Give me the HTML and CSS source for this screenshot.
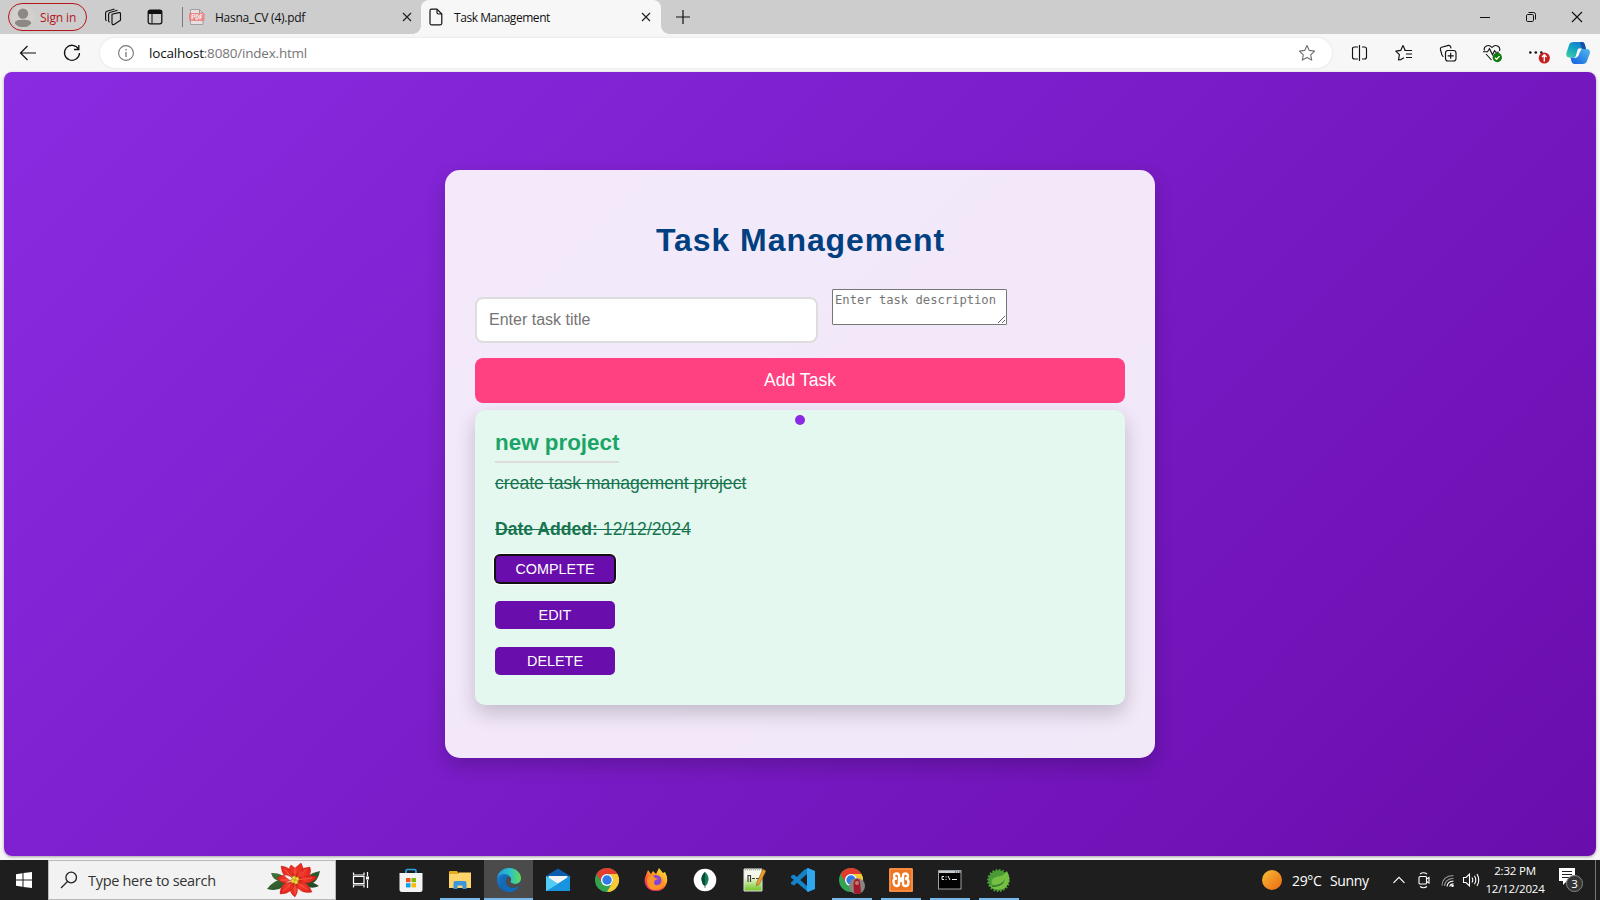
FILE: index.html
```html
<!DOCTYPE html>
<html lang="en">
<head>
<meta charset="utf-8">
<title>Task Management</title>
<link rel="stylesheet" href="styles.css">
</head>
<body>
<header class="tabstrip">
  <div class="signin">
    <svg class="avatar" width="22" height="22" viewBox="0 0 22 22"><defs><clipPath id="av"><circle cx="11" cy="11" r="11"/></clipPath></defs><g clip-path="url(#av)"><rect width="22" height="22" fill="#d3d0cd"/><circle cx="11" cy="7.6" r="5.2" fill="#8c8883"/><path d="M2.8 17.5C2.8 14.4 6 13.8 11 13.8s8.200.6 8.200 3.700C17 20.500 14 21 11 21s-6-.5-8.200-3.500z" fill="#8c8883"/></g></svg>
    <span>Sign in</span>
  </div>
  <svg class="workspaces" width="18" height="18" viewBox="0 0 18 18" fill="none" stroke="#111" stroke-width="1.15" stroke-linejoin="round"><path d="M8 6.200 14.800 4.600q1.700-.2 1.700 1.200v6.400L10 16.500q-2 .6-2-1.200z"/><path d="M5.600 14.200q-1-.3-1-1.500V6.200q0-1.300 1.300-1.700L13.500 2.300M2.600 12.700q-1-.4-1-1.500V4.900q0-1.300 1.300-1.700L10.500 1"/></svg>
  <svg class="tabmenu" width="16" height="16" viewBox="0 0 16 16"><rect x="1.200" y="1.200" width="13.600" height="13.600" rx="2" fill="none" stroke="#111" stroke-width="1.300"/><path d="M1.200 5V3q0-2 2-2h9.600q2 0 2 2v2z" fill="#111"/><path d="M5 5v9.500" stroke="#111"/></svg>
  <div class="tab">
    <svg width="16" height="18" viewBox="0 0 16 18"><path d="M1.500 1.500h9l3.500 3.500v11.500h-12.500z" fill="#e9dfe0" stroke="#a0a0a0"/><path d="M10.500 1.500v3.500H14" fill="none" stroke="#999"/><rect y="5" width="15.500" height="8" rx="1" fill="#e88888"/><path d="M3 11.500v-5h1.500q1.200 0 1.200 1.300T4.500 9H3M7 6.700v4.600h.8q1.600 0 1.600-2.300T7.800 6.700zM11 11.500V6.800h2.400M11 9h2" fill="none" stroke="#fff" stroke-width="1"/></svg>
    <span class="tab-label">Hasna_CV (4).pdf</span>
    <svg class="close" width="10" height="10" viewBox="0 0 10 10"><path d="M1 1l8 8M9 1L1 9" stroke="#222" stroke-width="1.200"/></svg>
  </div>
  <div class="tab active">
    <svg width="14" height="18" viewBox="0 0 14 18" fill="none" stroke="#111" stroke-width="1.200" stroke-linejoin="round"><path d="M2.500 1.200h5.500L12.800 6v9.300q0 1.500-1.500 1.500H2.500Q1 16.800 1 15.300V2.700q0-1.500 1.500-1.500z"/><path d="M8 1.400V4.500Q8 6 9.500 6h3"/></svg>
    <span class="tab-label">Task Management</span>
    <svg class="close" width="10" height="10" viewBox="0 0 10 10"><path d="M1 1l8 8M9 1L1 9" stroke="#222" stroke-width="1.200"/></svg>
  </div>
  <svg class="newtab" width="14" height="14" viewBox="0 0 14 14"><path d="M7 0v14M0 7h14" stroke="#111" stroke-width="1.200"/></svg>
  <div class="window-controls">
    <svg width="12" height="12" viewBox="0 0 12 12"><path d="M1 6.500h10" stroke="#111"/></svg>
    <svg width="12" height="12" viewBox="0 0 12 12" fill="none" stroke="#111"><rect x="1.500" y="3.500" width="7" height="7" rx="1.200"/><path d="M3.500 1.500H8.500q2 0 2 2v5"/></svg>
    <svg width="12" height="12" viewBox="0 0 12 12"><path d="M1 1l10 10M11 1L1 11" stroke="#111" stroke-width="1.100"/></svg>
  </div>
</header>

<nav class="toolbar">
  <svg class="back" width="18" height="16" viewBox="0 0 18 16" fill="none" stroke="#111" stroke-width="1.200"><path d="M17 8H1.500M8.500 1L1.500 8l7 7"/></svg>
  <svg class="reload" width="18" height="18" viewBox="0 0 18 18" fill="none" stroke="#111" stroke-width="1.300"><path d="M15.500 5A7.500 7.500 0 1 0 16.500 9M15.800 1v4.500H11"/></svg>
  <div class="address">
    <svg width="16" height="16" viewBox="0 0 16 16" fill="none" stroke="#767676"><circle cx="8" cy="8" r="7.400" stroke-width="1.100"/><path d="M8 7v5M8 4v1.500" stroke-width="1.300"/></svg>
    <span class="url"><b>localhost</b>:8080/index.html</span>
    <svg class="star" width="18" height="18" viewBox="0 0 18 18" fill="none" stroke="#6e6e6e" stroke-width="1.100" stroke-linejoin="round"><path d="M9 1.500l2.300 4.900 5.300.7-3.900 3.700 1 5.300L9 13.500l-4.700 2.600 1-5.300L1.400 7.100l5.300-.7z"/></svg>
  </div>
  <div class="tools">
    <svg width="18" height="18" viewBox="0 0 18 18" fill="none" stroke="#111" stroke-width="1.150"><path d="M7 3H3.500Q1.500 3 1.500 5v8q0 2 2 2H7M11 3h2.500q2 0 2 2v8q0 2-2 2H11M8.500 1v16"/></svg>
    <svg width="18" height="18" viewBox="0 0 18 18" fill="none" stroke="#111" stroke-width="1.150" stroke-linejoin="round"><path d="M5 16L9 13.700M9.300 6.500H17M11 10H17M11 13.500H17M10.300 6.500L8 1.500 5.700 6.400.8 7.100l3.600 3.600-.9 5.300L5 15.500"/></svg>
    <svg width="18" height="18" viewBox="0 0 18 18" fill="none" stroke="#111" stroke-width="1.150"><rect x="6.500" y="6.500" width="10.500" height="10.500" rx="2.500"/><path d="M11.700 8.800v6M8.700 11.800h6M4.600 12.500q-1.200-.2-1.600-1.400L1.400 5.500q-.4-1.700 1.200-2.200L9.500 1.400q1.500-.3 2 1.100l.6 1.900"/></svg>
    <svg width="20" height="20" viewBox="0 0 20 20" fill="none" stroke="#111" stroke-width="1.100"><path d="M1.500 7.500C0 3.500 5.500.5 9 4.500 12.500.5 18 3.500 16.500 8M3 11l5.500 6M0 8.700h4.500l2-3 3 6 2-4 1.300 1.500h3"/><circle cx="14.300" cy="14.500" r="4.700" fill="#107c10" stroke="none"/><path d="M12 14.700l1.600 1.600 3-3.200" stroke="#fff" stroke-width="1.300"/></svg>
    <svg width="22" height="22" viewBox="0 0 22 22"><g fill="#111"><circle cx="2.300" cy="10.500" r="1.300"/><circle cx="7.800" cy="10.500" r="1.300"/><circle cx="13.300" cy="10.500" r="1.300"/></g><circle cx="16.300" cy="16" r="5.600" fill="#c62121"/><path d="M16.300 19.500v-6.500M14 15l2.300-2.300 2.300 2.300" fill="none" stroke="#fff" stroke-width="1.400"/></svg>
    <svg width="24" height="24" viewBox="0 0 24 24"><defs><linearGradient id="c1" x1="0" y1="1" x2=".6" y2="0"><stop offset="0" stop-color="#45cfa5"/><stop offset=".55" stop-color="#11a7c0"/><stop offset="1" stop-color="#167bd3"/></linearGradient><linearGradient id="c2" x1="1" y1="0" x2="0" y2="1"><stop offset="0" stop-color="#52b8f0"/><stop offset="1" stop-color="#125ee0"/></linearGradient></defs><path d="M7.500 1H16q2 0 2.700 2.300L20 8h-5q-2 0-2.700 2.200L10.500 16.500H3.400Q-.2 16.500.4 12L3 4.200Q4 1 7.500 1z" fill="url(#c1)"/><path d="M14 1h2q2 0 2.700 2.300L20 8h-4z" fill="#184ea5"/><path d="M15.500 8h5.200q3.900 0 3.100 4.500l-2.700 7.300Q20 23 16.500 23H8.200q-2 0-2.700-2.400L4.400 16.500H9q2.200 0 3-2.300z" fill="url(#c2)"/><path d="M12.500 7.500h4q-1.800.3-2.500 2.500l-1.500 4.500q-.7 2-3 2.200H8q1.500-.5 2-2.200l1.200-4.500q.5-1.800 1.300-2.500z" fill="#fff"/></svg>
  </div>
</nav>

<main class="page">
  <section class="container">
    <h1>Task Management</h1>
    <form class="task-form">
      <input class="title-input" type="text" placeholder="Enter task title">
      <textarea class="desc-input" placeholder="Enter task description"></textarea>
      <button class="add" type="button">Add Task</button>
    </form>
    <article class="task">
      <i class="dot"></i>
      <h2>new project</h2>
      <p>create task management project</p>
      <p class="date"><strong>Date Added:</strong> 12/12/2024</p>
      <button class="action focused" type="button">COMPLETE</button>
      <button class="action" type="button">EDIT</button>
      <button class="action" type="button">DELETE</button>
    </article>
  </section>
</main>

<footer class="taskbar">
  <div class="start"><svg width="16" height="16" viewBox="0 0 16 16" fill="#fff"><path d="M0 2.200l6.500-.9v6.200H0zM7.500 1.100L16 0v7.500H7.500zM0 8.500h6.500v6.200L0 13.800zM7.500 8.500H16V16l-8.500-1.100z"/></svg></div>
  <div class="search">
    <svg width="18" height="18" viewBox="0 0 18 18" fill="none" stroke="#222" stroke-width="1.300"><circle cx="11.200" cy="6.500" r="5.300"/><path d="M7.500 10.500L1 17"/></svg>
    <span>Type here to search</span>
    <svg class="flower" width="54" height="36" viewBox="0 0 54 36"><defs><linearGradient id="leaf" x1="0" y1="0" x2="1" y2="1"><stop offset="0" stop-color="#4a7a3c"/><stop offset="1" stop-color="#1a4020"/></linearGradient><radialGradient id="pet" gradientUnits="userSpaceOnUse" cx="28" cy="18" r="18"><stop offset="0" stop-color="#b91410"/><stop offset=".45" stop-color="#f2392a"/><stop offset="1" stop-color="#e2251c"/></radialGradient></defs><g fill="url(#leaf)"><path d="M0 27Q8 16 20 17Q17 31 0 27zM4 11Q15 10 21 19 7 22 4 11zM53 9Q50 24 37 23 37 12 53 9zM38 19Q47 20 52 24 44 28 37 23z"/></g><g fill="url(#pet)" stroke="#b81712" stroke-width=".4"><path d="M28 20Q15 17 14 4q13 1 14 16zM28 20Q19 9 24 3l4 3 6-5q6 9-6 19zM28 20q0-14 15-15 4 12-15 15zM28 20q10-9 22-5-6 9-22 5zM26 18q14-1 19 12-14 3-19-12zM27 18q7 8 1 17-9-6-1-17zM28 18q-1 14-15 14 0-13 15-14zM28 18q-9-9-18-2 6 9 18 2z"/></g><path d="M27 17L17 7M28 17V5M29 17l11-10M30 18l15-2M29 20l12 8M28 20v12M26 20L16 29M25 18H13" stroke="#ff8468" stroke-width=".5"/><g fill="#f3d83b" stroke="#a59312" stroke-width=".5"><circle cx="27" cy="16" r="2"/><circle cx="30" cy="17" r="2"/><circle cx="26" cy="19" r="2"/><circle cx="29" cy="20" r="2"/></g></svg>
  </div>
  <div class="apps">
    <div class="app"><svg width="20" height="20" viewBox="0 0 20 20" fill="none" stroke="#fff" stroke-width="1.200"><path d="M1.500 2.500V5h10.500V2.500M1.500 17.500V15h10.500v2.500M1.500 6.500h10.500v7H1.500zM15.500 2v4M15.500 10v8"/><path d="M14 6.500h3v3h-3z" fill="#fff" stroke="none"/></svg></div>
    <div class="app"><svg width="24" height="24" viewBox="0 0 24 24"><path d="M7 6V3q0-1.500 1.500-1.500h7Q17 1.500 17 3v3" fill="none" stroke="#2ba2e5" stroke-width="1.700"/><path d="M.5 5h23v16.500q0 2.500-2.500 2.500H3Q.5 24 .5 21.500z" fill="#f3f3f3"/><path d="M7 10h4.500v4.200H7z" fill="#f05022"/><path d="M12.500 10H17v4.200h-4.500z" fill="#7fba00"/><path d="M7 15.200h4.500v4.200H7z" fill="#00a4ef"/><path d="M12.500 15.200H17v4.200h-4.500z" fill="#ffb900"/></svg></div>
    <div class="app open"><svg width="24" height="24" viewBox="0 0 24 24"><path d="M1 4q0-1 1-1h7l1.500 2H22q1 0 1 1v14H1z" fill="#e9a91d"/><path d="M1 6h9l1-1.500H23V20H1z" fill="#fdd56b"/><path d="M5.500 21v-6q0-2 2-2h9q2 0 2 2v6h-4v-3.500h-5V21z" fill="#3a95dc"/></svg></div>
    <div class="app open current"><svg width="24" height="24" viewBox="0 0 24 24"><defs><linearGradient id="e1" x1="0" x2="1"><stop offset="0" stop-color="#2497dc"/><stop offset=".55" stop-color="#2cc2c9"/><stop offset="1" stop-color="#66dc4b"/></linearGradient><linearGradient id="e2" x1="0" y1="0" x2="1" y2="1"><stop offset="0" stop-color="#1c83cf"/><stop offset="1" stop-color="#0c4b96"/></linearGradient></defs><circle cx="12" cy="12" r="12" fill="url(#e2)"/><path d="M0 11C1 4 6 0 12 0c7 0 12 5 12 10 0 4-3 6-6 6-4 0-5-1.500-4.500-2.500C15 10 12 6 7.500 6 3.500 6 1 8.500 0 11z" fill="url(#e1)"/><path d="M8 13c0-2.500 2-4.500 4-4.500 2.500 1 2.500 3.500 1.500 5 0 1.500 2 2.500 4.500 2.500 2 0 3.500-.5 4.500-1.200l2 .2C23 19 19 20 16 20c-5 0-8-3-8-7z" fill="#4b4b4b"/><path d="M4 13c0-4 4-6 8-4.500-5 2-5 10.500 4 11.500 2 0 4-1 6-2-2 4-6 6-10 6-5 0-8-5-8-11z" fill="#126bb8"/></svg></div>
    <div class="app"><svg width="24" height="24" viewBox="0 0 24 24"><path d="M0 8L12 .5 24 8v5H0z" fill="#0b5cad"/><path d="M2.500 8h19v10h-19z" fill="#f2f4f5"/><path d="M0 8l12 8 12-8v15H0z" fill="#38b4ed"/><path d="M0 23L24 8v15z" fill="#1b94df"/><path d="M0 8l12 8-12 7z" fill="#52cdf6"/></svg></div>
    <div class="app"><svg width="24" height="24" viewBox="0 0 24 24"><g id="chrome"><circle cx="12" cy="12" r="12" fill="#32a350"/><path d="M1.600 6A12 12 0 0 1 22.400 6H12a6 6 0 0 0-5.200 9z" fill="#e33b2e"/><path d="M22.400 6A12 12 0 0 1 12 24l5.200-9A6 6 0 0 0 12 6z" fill="#fcc934"/><circle cx="12" cy="12" r="6" fill="#fff"/><circle cx="12" cy="12" r="4.700" fill="#317be8"/></g></svg></div>
    <div class="app"><svg width="24" height="24" viewBox="0 0 24 24"><defs><linearGradient id="ff" x1="1" y1="0" x2=".2" y2="1"><stop offset="0" stop-color="#fff04c"/><stop offset=".4" stop-color="#ffad22"/><stop offset=".7" stop-color="#ff5636"/><stop offset="1" stop-color="#e52177"/></linearGradient></defs><path d="M4 2l3 4 2-3 3 3 3-6 4 5 2-1q4 7 1 13-3 6-10 6Q4 23 1.500 17-.5 12 2 7z" fill="url(#ff)"/><circle cx="12" cy="12.500" r="5.500" fill="#8445d8"/><path d="M4 9q5-3 7 1l4 1q-4 0-5 3 0 4 4 3 5-1 4-7 4 7-2 11-9 3-12-3Q2 13 4 9z" fill="#ff9428"/></svg></div>
    <div class="app"><svg width="24" height="24" viewBox="0 0 24 24"><circle cx="12" cy="12" r="11.300" fill="#fff"/><path d="M12 4q4 3.500 3.500 8Q15 16 12 18.500 9 16 8.500 12 8 7.500 12 4z" fill="#11805a"/><path d="M12 4q-4 3.500-3.500 8Q9 16 12 18.500z" fill="#064b3b"/><path d="M12 17v3" stroke="#889" stroke-width="1"/></svg></div>
    <div class="app"><svg width="24" height="24" viewBox="0 0 24 24"><defs><linearGradient id="np" x1="0" y1="0" x2="0" y2="1"><stop offset=".35" stop-color="#f5faec"/><stop offset="1" stop-color="#6fc51d"/></linearGradient></defs><path d="M2 1h18v22H2z" fill="url(#np)" stroke="#ddd"/><path d="M3 1.500h17" stroke="#aaa" stroke-width="2" stroke-dasharray="1 1"/><path d="M6 7v7M6 7.500h2.500V14M10 10.500h3M14 10.500h3" stroke="#443b40" fill="none" stroke-width="1.200"/><path d="M21 1L24 3 17.500 16l-3 2 .3-3.500z" fill="#ec9c28" stroke="#76501d" stroke-width=".5"/></svg></div>
    <div class="app"><svg width="24" height="24" viewBox="0 0 24 24"><path d="M17 0l-1 6L3 17.500 0 16v-1.500L13 2z" fill="#1680c4"/><path d="M0 9.500V8l3-1.500L16 18l1 6z" fill="#1485cc"/><path d="M17 0l7 3v18l-7 3-1-1V1z" fill="#2fa7ee"/></svg></div>
    <div class="app open"><svg class="profiled" width="26" height="26" viewBox="0 0 26 26"><use href="#chrome"/><circle cx="18" cy="18" r="8" fill="#8b8482"/><path d="M15 25l-.5-9Q15 11 18 11t3.200 5l.8 9q-3 2-7 0z" fill="#a51a2a"/><circle cx="18" cy="15" r="2" fill="#b98068"/></svg></div>
    <div class="app open"><svg width="24" height="24" viewBox="0 0 24 24"><rect width="24" height="24" rx="1.500" fill="#ee7420"/><rect x="1" y="1" width="22" height="22" fill="none" stroke="#f9a164"/><path d="M8 10.500Q5 10.500 5 8t2.700-2.500Q10 5.500 10 8v2.500h4V8q0-2.500 2.300-2.500T19 8t-3 2.500q3.500 0 3.500 3.700T16.500 18Q14 18 14 15.500v-2.700h-4v2.700Q10 18 7.500 18t-3-3.800T8 10.500" fill="none" stroke="#fff" stroke-width="2.400"/></svg></div>
    <div class="app open"><svg width="24" height="20" viewBox="0 0 24 20"><rect x=".5" y=".5" width="22.500" height="18.500" fill="#020202" stroke="#9ca1a3"/><path d="M1 1h21.500v2H1z" fill="#c7ccd0"/><path d="M17 2h1M19 2h1M21 2h1" stroke="#333"/><path d="M6 6.500H4v3h2M8 6.500v1M8 9v1M10 6l2 4M14 9.500h5" fill="none" stroke="#eee"/></svg></div>
    <div class="app open"><svg width="24" height="24" viewBox="0 0 24 24"><circle cx="11.500" cy="12.500" r="10.300" fill="#4a9b35"/><circle cx="11.500" cy="12.500" r="10.500" fill="none" stroke="#4a9b35" stroke-width="2" stroke-dasharray="1.700 1.600"/><path d="M20 3q4 8 1 13-3 6-10 5.500-6 0-8-4 9 2 14-3-5 3-12 2Q3 10 11 8.500 17 8 20 3z" fill="#75c043"/><path d="M5 18q9 0 13-7-2 8-13 8z" fill="#2b7428"/></svg></div>
  </div>
  <div class="weather"><i class="sun"></i><span class="temp">29°C</span><span>Sunny</span></div>
  <div class="tray">
    <svg class="chevron" width="14" height="14" viewBox="0 0 14 14"><path d="M1.500 9.800L7 4.300l5.500 5.500" fill="none" stroke="#fff" stroke-width="1.200"/></svg>
    <svg class="meet" width="14" height="18" viewBox="0 0 14 18" fill="none" stroke="#fff" stroke-width="1.100"><rect x="2" y="5.500" width="7.500" height="7.500" rx="1"/><path d="M9.500 8l2.500-1.500v5.500L9.500 10.500M3 3Q6.500.5 10 3M3 15.500q3.500 2.500 7 0"/></svg>
    <svg class="wifi" width="14" height="16" viewBox="0 0 14 16" fill="none" stroke="#fff" stroke-width="1.100"><g opacity=".55"><path d="M1 13.500Q1.500 4 12.500 3.500M3.500 14Q4 7 12.500 6.200"/></g><path d="M6 14.500Q6.500 9.500 12.500 9M8.700 14.500Q9 12 12.500 11.700"/><circle cx="11.500" cy="13.700" r="1.300" fill="#fff" stroke="none"/></svg>
    <svg class="sound" width="18" height="16" viewBox="0 0 18 16" fill="none" stroke="#fff" stroke-width="1.100"><path d="M1.500 5.500H4L7.500 2v12L4 10.500H1.500zM10 5.500q1.500 2.500 0 5M12.500 3.700q2.500 4.300 0 8.600M15 2q3.500 6 0 12"/></svg>
    <div class="clock"><span>2:32 PM</span><span>12/12/2024</span></div>
    <svg class="notice" width="26" height="26" viewBox="0 0 26 26"><path d="M1 1h16v13H9l-4 4v-4H1z" fill="#fff"/><path d="M4 4.500h10M4 7.500h10M4 10.500h7" stroke="#222"/><circle cx="16.500" cy="16.500" r="8" fill="#343434" stroke="#888"/><text x="16.500" y="20.800" text-anchor="middle" class="notice-count">3</text></svg>
  </div>
</footer>
</body>
</html>
```
FILE: styles.css
```css
* { box-sizing: border-box; }

body {
  margin: 0;
  width: 1600px;
  height: 900px;
  overflow: hidden;
  display: flex;
  flex-direction: column;
  background: #f7f7f7;
  font-family: "Open Sans", "Noto Sans", sans-serif;
}

svg { display: block; flex: none; }

/* Browser tabs */
.tabstrip {
  height: 34px;
  flex: none;
  display: flex;
  align-items: center;
  background: #cdcdcd;
  font-size: 12px;
  color: #111;
}

.signin {
  width: 79px;
  height: 28px;
  margin-left: 8px;
  padding-left: 3px;
  display: flex;
  align-items: center;
  gap: 6px;
  border: 1px solid #b3161b;
  border-radius: 14px;
  color: #b3161b;
  white-space: nowrap;
  letter-spacing: -.1px;
}

.workspaces { margin-left: 17px; }
.tabmenu { margin-left: 25px; }

.tab {
  width: 239px;
  height: 20px;
  margin-left: 19px;
  padding: 0 9px 0 6px;
  display: flex;
  align-items: center;
  border-left: 1px solid #7d7d7d;
}

.tab-label {
  margin-left: 10px;
  white-space: nowrap;
  letter-spacing: -.25px;
}

.close { margin-left: auto; }

.tab.active {
  width: 240px;
  height: 34px;
  margin-left: 0;
  padding: 0 10px 0 8px;
  border: 0;
  border-radius: 8px 8px 0 0;
  background: #f7f7f7;
  position: relative;
}

.tab.active .tab-label {
  margin-left: 11px;
  letter-spacing: -.45px;
}

.tab.active::before,
.tab.active::after {
  content: "";
  position: absolute;
  bottom: 0;
  width: 8px;
  height: 8px;
}

.tab.active::before { left: -8px; background: radial-gradient(circle at 0 0, transparent 7.5px, #f7f7f7 8px); }
.tab.active::after { right: -8px; background: radial-gradient(circle at 100% 0, transparent 7.5px, #f7f7f7 8px); }

.newtab { margin-left: 15px; }

.window-controls {
  margin: 0 17px 0 auto;
  display: flex;
  gap: 34px;
}

/* Address bar */
.toolbar {
  height: 38px;
  flex: none;
  display: flex;
  align-items: center;
  background: #f7f7f7;
}

.back { margin-left: 19px; }
.reload { margin-left: 26px; }

.address {
  width: 1232px;
  height: 30px;
  margin-left: 19px;
  padding: 0 16px 0 18px;
  display: flex;
  align-items: center;
  border-radius: 15px;
  background: #fff;
  box-shadow: 0 0 3px rgba(0, 0, 0, .1);
}

.url {
  margin-left: 15px;
  font-size: 13.5px;
  letter-spacing: -.2px;
  color: #767676;
}

.url b { font-weight: 400; color: #111; }
.star { margin-left: auto; }

.tools {
  margin-left: 19px;
  display: grid;
  grid-template-columns: 44px 44px 44px 45px 38px 24px;
  align-items: center;
}

/* Task page */
.page {
  height: 784px;
  flex: none;
  margin: 0 4px 4px;
  padding-top: 98px;
  border-radius: 8px;
  background: linear-gradient(135deg, #8a2be2, #6a0dad);
  box-shadow: 0 1px 3px rgba(0, 0, 0, .35);
  font-family: "Liberation Sans", Arial, sans-serif;
}

.container {
  width: 710px;
  height: 588px;
  margin: 0 auto;
  padding: 52px 30px 0;
  border-radius: 15px;
  background: rgba(255, 255, 255, .9);
  box-shadow: 0 8px 20px rgba(0, 0, 0, .2);
}

h1 {
  margin: 0;
  padding-left: 1px;
  font-size: 32px;
  line-height: 37px;
  letter-spacing: .93px;
  text-align: center;
  color: #004080;
}

.task-form {
  margin-top: 30px;
  display: grid;
  grid-template-columns: 343px 175px;
  column-gap: 14px;
}

.title-input {
  height: 46px;
  margin-top: 8px;
  padding: 0 12px;
  border: 2px solid #ddd;
  border-radius: 8px;
  background: #fff;
  font: 16px "Liberation Sans", Arial, sans-serif;
}

.desc-input {
  width: 175px;
  height: 36px;
  margin: 0;
  padding: 2px;
  border: 1px solid #767676;
  border-radius: 1px;
  background: #fff;
  font: 12.17px/16px "DejaVu Sans Mono", monospace;
  overflow: hidden;
}

::placeholder { color: #757575; }

.add {
  grid-column: 1 / -1;
  width: 650px;
  height: 45px;
  margin-top: 15px;
  padding: 0;
  border: 0;
  border-radius: 8px;
  background: #ff4081;
  color: #fff;
  font: 17.6px "Liberation Sans", Arial, sans-serif;
}

.task {
  position: relative;
  height: 295px;
  margin-top: 7px;
  padding: 20px 20px 0;
  display: flex;
  flex-direction: column;
  align-items: flex-start;
  border-radius: 10px;
  background: #e5f8f0;
  color: #16744f;
  box-shadow: 0 8px 20px rgba(0, 0, 0, .2);
}

.task > * { flex: none; }

.dot {
  position: absolute;
  top: 5px;
  left: 320px;
  width: 10px;
  height: 10px;
  border-radius: 50%;
  background: #8a2be2;
}

h2 {
  height: 33px;
  margin: 0;
  border-bottom: 2px solid #ddd;
  font-size: 22.4px;
  line-height: 25px;
  color: #1aa567;
}

.task p {
  margin: 10px 0 0;
  font-size: 17.6px;
  line-height: 20px;
  text-decoration: line-through;
}

.task .date { margin: 26px 0 16px; }

.action {
  width: 120px;
  height: 28px;
  margin-bottom: 18px;
  padding: 0;
  border: 0;
  border-radius: 5px;
  background: #6a0dad;
  color: #fff;
  font: 14.4px "Liberation Sans", Arial, sans-serif;
}

.focused { box-shadow: 0 0 0 1px #101010, inset 0 0 0 1px #101010, 0 0 0 2px #fff; }

/* Desktop taskbar */
.taskbar {
  height: 40px;
  flex: none;
  display: flex;
  background: #1e1e1e;
  color: #fff;
}

.start {
  width: 48px;
  display: grid;
  place-items: center;
}

.search {
  width: 288px;
  padding: 0 14px 0 11px;
  display: flex;
  align-items: center;
  border: 1px solid #b9b9b9;
  background: #f2f2f2;
  color: #333;
  font-size: 14.5px;
  letter-spacing: -.3px;
}

.search span { margin-left: 10px; white-space: nowrap; }
.flower { margin-left: auto; }
.apps { margin-left: 1px; display: flex; }

.app {
  width: 49px;
  display: grid;
  place-items: center;
}

.open { background: linear-gradient(#76b9ed, #76b9ed) center bottom / 40px 2px no-repeat; }
.current { background: linear-gradient(#76b9ed, #76b9ed) center bottom / 100% 2px no-repeat #4b4b4b; }
.profiled { margin: 1px 0 0 1px; }

.weather {
  margin-left: 239px;
  display: flex;
  align-items: center;
  font-size: 14px;
  letter-spacing: -.35px;
}

.sun {
  width: 20px;
  height: 20px;
  margin-right: 10px;
  border-radius: 50%;
  background: linear-gradient(135deg, #f4bd35, #ef6812);
}

.temp { width: 38px; }

.tray {
  width: 204px;
  margin: 0 4px 0 auto;
  display: flex;
  align-items: center;
  border-right: 1px solid #777;
}

.meet { margin-left: 11px; }
.wifi { margin-left: 10px; }
.sound { margin-left: 7px; }

.clock {
  width: 60px;
  margin-left: 5px;
  display: flex;
  flex-direction: column;
  align-items: center;
  font-size: 11.5px;
  line-height: 18px;
  letter-spacing: -.2px;
  white-space: nowrap;
}

.notice { margin-left: 13px; }
.notice-count { fill: #fff; font: 11.5px "Open Sans", sans-serif; }
```
